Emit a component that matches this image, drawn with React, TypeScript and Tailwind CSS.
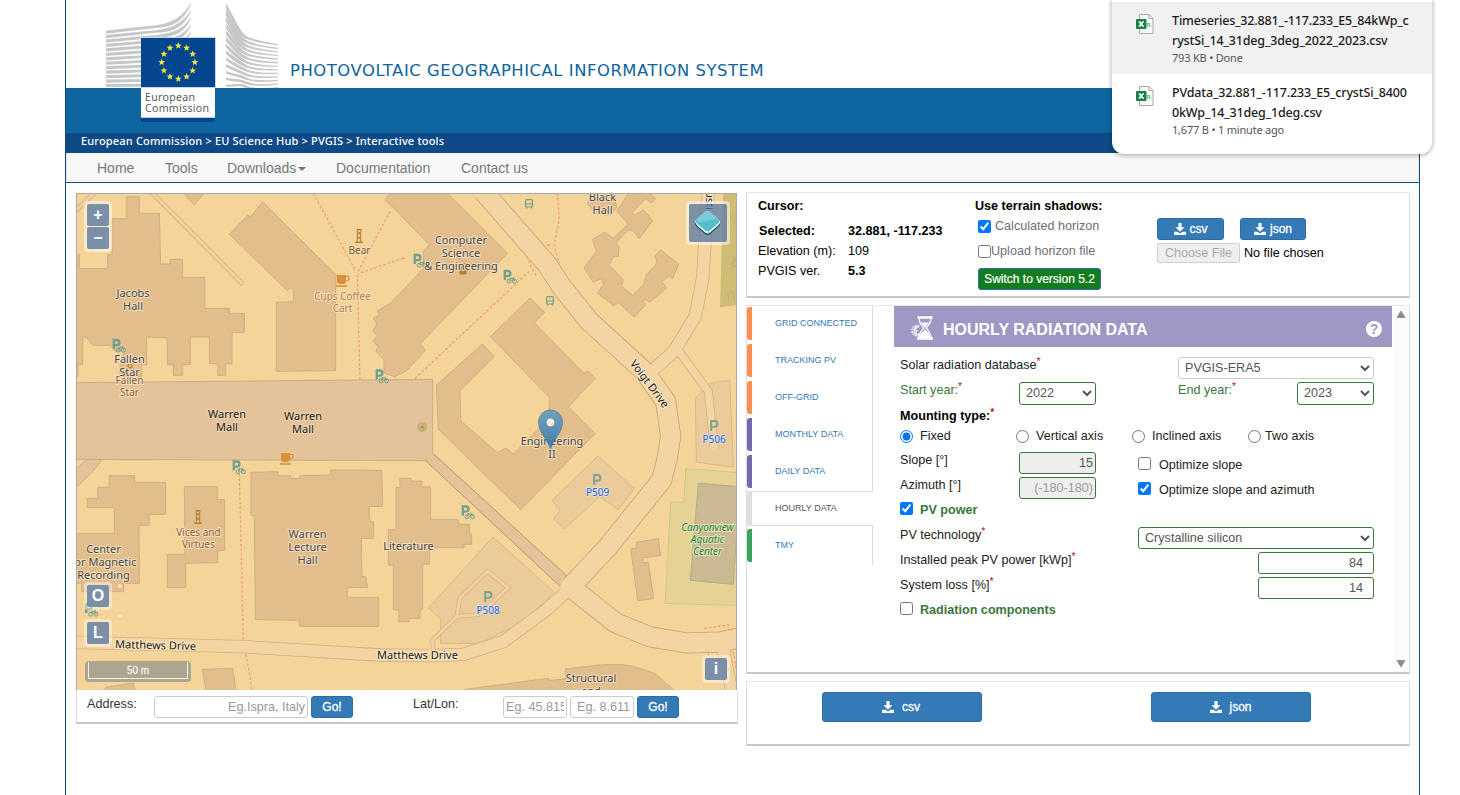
import React from "react";

const ARIAL = "font-['Liberation_Sans',Arial,sans-serif]";
const NOTO = "'Noto Sans', sans-serif";

const range = (n: number) => Array.from({ length: n }, (_, i) => i);

function starPoints(cx: number, cy: number, r: number) {
  return range(10)
    .map((i) => {
      const a = (Math.PI / 5) * i - Math.PI / 2;
      const q = i % 2 ? r * 0.42 : r;
      return `${cx + q * Math.cos(a)},${cy + q * Math.sin(a)}`;
    })
    .join(" ");
}

function CommissionLogo() {
  return (
    <svg width="174" height="122" viewBox="105 0 174 122" className="relative z-10 ml-[39px] shrink-0">
      <defs>
        <clipPath id="pleats">
          <rect x="105" y="0" width="174" height="88" />
        </clipPath>
      </defs>
      <g fill="#c6c7c8" clipPath="url(#pleats)">
        {range(13).map((i) => {
          const a = 30.5 + 4.45 * i;
          const m = 25 + 4.9 * i;
          const e = 3 + 7 * i;
          return (
            <path
              key={i}
              d={`M106 ${a} L158 ${m} C172 ${m - 2} 183 ${e + 13} 191 ${e} L191 ${e + 1.4} C184 ${e + 16.5} 174 ${m + 2.2} 158 ${m + 2.7} L106 ${a + 3.2}Z`}
            />
          );
        })}
        {range(13).map((i) => {
          const a = 3 + 6.8 * i;
          const m = 37 + 4.1 * i;
          const e = 44.3 + 3.55 * i;
          const t = Math.max(2, 6 - i * 0.35);
          return (
            <path
              key={i}
              d={`M226 ${a} C234 ${a + (m - a) * 0.4} 240 ${m - 4} 248 ${m} Q256 ${m + 3.5} 278 ${e} L278 ${e + 1.2} Q256 ${m + 5.5} 246 ${m + 1.8} C238 ${m - 1.5} 233 ${a + t + (m - a) * 0.4} 226 ${a + t}Z`}
            />
          );
        })}
      </g>
      <rect x="141" y="37" width="75" height="51" fill="#c9d6e6" />
      <rect x="141" y="38" width="74" height="49" fill="#03458f" />
      {range(12).map((i) => (
        <polygon
          key={i}
          fill="#f8e83c"
          points={starPoints(178.3 + 16.6 * Math.cos((i * Math.PI) / 6), 62.3 + 16.6 * Math.sin((i * Math.PI) / 6), 3.6)}
        />
      ))}
      <rect x="141" y="88" width="74" height="30" fill="#fff" />
      <rect x="141" y="117" width="74" height="1" fill="#b9cbe0" />
      <rect x="141" y="118" width="74" height="4" fill="#03458f" />
      <g fill="#58595b" fontFamily={NOTO} fontSize="10.6">
        <text x="145" y="101" textLength="50">European</text>
        <text x="145" y="112" textLength="64">Commission</text>
      </g>
    </svg>
  );
}

const polysTL = [
  "20,200 28,200 28,242 113,242 113,200 126,200 126,92 170,92 170,26 208,26 208,76 268,76 272,228 300,228 300,214 338,214 338,268 404,268 404,361 478,361 478,376 523,376 523,434 486,434 486,527 467,527 467,562 443,562 443,527 418,527 418,447 361,447 361,530 338,530 338,562 310,562 310,530 292,530 292,450 230,447 230,530 214,530 214,565 150,565 150,530 160,530 160,490 136,490 120,472 68,472 50,448 38,448 38,530 24,530 24,566 14,566",
  "578,42 800,262 797,270 797,548 619,550 619,343 670,341 670,307 662,298 652,308 478,139 533,82 542,86",
  "336,12 372,50 407,12",
];
const polysTR = [
  "-45,35 -26,12 138,12 322,196 60,468 77,487 20,548 -16,566 -48,555 -48,515 -72,490 -66,475 -81,458 -68,444 -82,428 -69,407 -81,391 -61,380 -69,369 -30,347 0,316 72,240 70,190 88,170 0,80",
  "650,70 685,108 640,150 612,132 600,142 577,155 590,190 552,240 580,282 605,272 610,290 592,315 642,354 655,343 702,388 738,350 727,340 737,335 750,342 800,300 785,280 808,265 818,272 836,228 781,185 765,205 772,225 740,260 730,290 698,323 665,295 670,275 627,232 640,205 655,205 657,180 648,165 680,130 697,125 717,152 758,98 730,65 705,82 695,75 737,32 755,45 767,32 745,10 690,10",
  "562,48 580,10 640,10 650,60 625,82 590,75",
  "390,330 434,373 403,404 552,556 564,548 585,571 506,657 585,737 362,965 115,724 109,592 247,468 283,505 180,608 182,698 292,794 318,780 340,798 448,690 448,628 271,446",
];
const polysBL = [
  "543,52 624,50 624,62 662,62 662,70 690,70 690,62 782,60 782,45 935,46 938,154 897,154 900,199 910,199 910,250 874,250 876,365 887,365 893,397 832,397 832,427 926,427 926,514 688,514 688,496 556,494 553,182 543,182",
  "343,95 442,95 442,134 464,134 464,287 443,287 443,323 347,325 347,398 292,398 292,298 345,298",
  "117,62 194,62 194,82 287,82 287,178 237,178 237,211 207,211 208,385 161,385 161,410 35,410 35,385 14,385 14,235 133,235 133,158 52,158 52,130 83,130 83,97 117,97",
  "398,643 488,640 499,712 408,712",
  "106,697 190,684 196,712 106,712",
];
const polysBR = [
  "0,70 33,70 33,78 66,78 66,96 92,96 92,193 175,193 175,208 208,208 208,238 215,238 215,268 192,268 192,278 88,278 88,328 68,328 68,464 60,464 60,490 28,490 28,500 -4,500 -4,465 -20,465 -20,330 -35,330 -35,223 -12,223 -12,98 0,98",
  "709,262 775,251 782,301 728,309 729,324 745,322 761,431 713,437 692,281 709,279",
  "496,642 610,629 670,629 700,634 765,655 826,710 190,710 195,703 446,670 446,676 496,672",
];

const TL = "translate(70 188) scale(.33333)";
const TR = "translate(400 188) scale(.33333)";
const BL = "translate(70 455) scale(.33333)";
const BR = "translate(400 455) scale(.33333)";

function Polys({ at, list }: { at: string; list: string[] }) {
  return (
    <g transform={at}>
      {list.map((p) => (
        <polygon key={p} points={p} fill="#e3be8d" stroke="#d3ad7d" strokeWidth="3" />
      ))}
    </g>
  );
}

type Road = { d: string; w: number; edge: string };
// Road centre lines share the top-right tile's coordinates.
const roads: Road[] = [
  { d: "M-976 1363 L-470 1376 L-60 1401 L100 1403 L190 1399 L310 1361 L440 1265 L520 1192", w: 35, edge: "#d2b083" },
  { d: "M925 10 L908 270 L886 385 L822 490 L755 550", w: 35, edge: "#d2b083" },
  { d: "M838 492 L925 610 L942 775", w: 22, edge: "#d2b083" },
  { d: "M970 1385 L1010 1580", w: 34, edge: "#d2b083" },
  { d: "M250 10 L442 230 L486 298 L568 400 L733 550 L797 640 L812 745 L801 815 L785 876 L622 1079 L512 1196", w: 58, edge: "#c5a376" },
  { d: "M510 1196 L646 1304 L748 1346 L860 1365 L962 1362 L1030 1347", w: 58, edge: "#c5a376" },
];

function Label({
  x,
  y,
  lines,
  size = 11,
  lh = 13,
  fill = "#4a4540",
  halo = "#f3dfc0",
}: {
  x: number;
  y: number;
  lines: string[];
  size?: number;
  lh?: number;
  fill?: string;
  halo?: string;
}) {
  return (
    <g
      fontSize={size}
      fill={fill}
      stroke={halo}
      strokeWidth="2"
      strokeLinejoin="round"
      paintOrder="stroke"
      textAnchor="middle"
    >
      {lines.map((l, i) => (
        <text key={i} x={x} y={y + i * lh}>
          {l}
        </text>
      ))}
    </g>
  );
}

function BikeParking({ x, y }: { x: number; y: number }) {
  return (
    <g transform={`translate(${x} ${y})`} fill="none" stroke="#729f90">
      <path d="M1.3 10V1h3a2.5 2.5 0 0 1 0 5.2H1.6" strokeWidth="2.3" />
      <g strokeWidth="1">
        <circle cx="5.6" cy="11.2" r="2" />
        <circle cx="11" cy="11.2" r="2" />
        <path d="M5.6 11.2L7 8.6h3l1 2.6M8.4 11L10 8.4M6.4 8h1.4M9.6 7.6h1.2" />
      </g>
    </g>
  );
}

function ParkingP({ x, y }: { x: number; y: number }) {
  return <path transform={`translate(${x} ${y})`} d="M1.2 11V1h3.4a2.8 2.8 0 0 1 0 5.7H1.2" fill="none" stroke="#7aa391" strokeWidth="2" />;
}

function Cup({ x, y }: { x: number; y: number }) {
  return (
    <g transform={`translate(${x} ${y})`} stroke="#d9923a">
      <path d="M1 0h9v6q0 3-3 3H4Q1 9 1 6Z" fill="#d9923a" stroke="none" />
      <path d="M10 1.5h3v2.2q0 1.8-3 1.8" fill="none" strokeWidth="1.2" />
      <path d="M0 11h11" strokeWidth="1.6" />
    </g>
  );
}

function Artwork({ x, y }: { x: number; y: number }) {
  return (
    <g transform={`translate(${x} ${y})`} fill="none" stroke="#b37f33" strokeWidth="1">
      <path d="M1.500 .7h5M0 13.300h8" strokeWidth="1.4" />
      <path d="M2.300 1.500v11M5.700 1.500v11M2.300 2.500l3.400 3.500M5.700 2.500L2.300 6M2.300 7l3.400 3.500M5.700 7l-3.400 3.500" />
    </g>
  );
}

function Bus({ x, y }: { x: number; y: number }) {
  return (
    <g transform={`translate(${x} ${y})`} fill="none" stroke="#729f90" strokeWidth="1.2">
      <rect x=".6" y=".6" width="6.8" height="7.4" rx="1" />
      <path d="M.6 5h6.8M1.5 8v1.6M6.5 8v1.6" />
    </g>
  );
}

function CampusMap() {
  return (
    <svg width="660" height="496" viewBox="77 194 660 496" className="block" fontFamily={NOTO}>
      <rect x="77" y="194" width="660" height="496" fill="#f5d499" />
      <g transform={TR}>
        <polygon points="970,10 1020,10 1020,350 960,358" fill="#cebd73" />
        <g fill="none" stroke="#c2ad67" strokeWidth="3">
          <path d="M985 110v-18l-4-4 8-12 8 12-4 4M1003 110V88M995 235l8-28 8 28zM985 335v-18l8-5M1003 338v-22l-6-6" />
        </g>
      </g>
      <g transform={BR}>
        <polygon points="858,41 1020,53 1020,452 796,445 812,142 851,142" fill="#e7d295" stroke="#c3cf7d" strokeWidth="3" />
        <polygon points="895,85 1020,95 1000,388 871,376" fill="#cbba91" stroke="#b3ae83" strokeWidth="3" />
        <g fill="#eccb9a" stroke="#dcb88a" strokeWidth="3">
          <polygon points="594,3 704,101 655,164 600,125 493,222 460,190 480,168 457,135" />
          <polygon points="279,246 462,411 410,465 350,510 240,565 122,565 122,492 85,459" />
        </g>
      </g>
      <polygon transform={TR} points="930,585 989,577 1000,838 889,822 886,632" fill="#eccb9a" stroke="#dcb88a" strokeWidth="3" />

      {/* pedestrian mall and service alleys */}
      <g transform={TR} fill="#e4c39a" stroke="#cdab80" strokeWidth="3">
        <path d="M-940 815 L-895 815 Q-915 850 -980 905 L-980 850Z" />
        <path d="M77 818 L102 799 L500 1163 L480 1195Z" stroke="#b9976b" />
        <polygon points="-980,584 98,574 98,797 77,818 -980,814" />
      </g>
      <path d="M427 459.500 L432.500 454.500" stroke="#e4c39a" strokeWidth="3" />
      <g transform={TL} fill="none">
        <path d="M240 8L514 284M10 75L80 8" stroke="#d9b587" strokeWidth="15" strokeLinecap="round" />
        <path d="M240 8L514 284M10 75L80 8" stroke="#f3d19c" strokeWidth="9" strokeLinecap="round" />
      </g>

      <Polys at={TL} list={polysTL} />
      <Polys at={TR} list={polysTR} />
      <Polys at={BL} list={polysBL} />
      <Polys at={BR} list={polysBR} />

      <g transform={TR} fill="none" strokeLinejoin="round">
        {roads.map((r) => (
          <path key={r.d} d={r.d} stroke={r.edge} strokeWidth={r.w + 5} />
        ))}
        {roads.map((r) => (
          <path key={r.d} d={r.d} stroke="#f5d4a4" strokeWidth={r.w} strokeLinecap="round" />
        ))}
      </g>
      <g transform={BR} fill="none">
        <path d="M100 585L98 555L170 485L180 428L262 349L324 398L240 478L170 485" stroke="#d9b587" strokeWidth="14" />
        <path d="M100 592L98 555L170 485L180 428L262 349L324 398L240 478L170 485" stroke="#f3d19f" strokeWidth="9" />
      </g>

      <g fill="none" stroke="#f29b76" strokeWidth="3.6" strokeDasharray="8 6">
        <g transform={TL}>
          <path d="M730 16L858 250M960 70L865 250M1000 210L865 257M862 260L870 578" />
        </g>
        <g transform={TR}>
          <path d="M388 250L43 573M472 16L478 90L462 175L478 225M380 205L395 240L408 262M442 172L455 170M6 212L16 210" />
        </g>
        <g transform={BL}>
          <path d="M507 14L520 558M527 598Q540 650 545 710" />
        </g>
        <g transform={BR}>
          <path d="M912 520L985 510L988 525M925 595L930 640M1000 590L1008 640" />
        </g>
      </g>

      <circle cx="422.3" cy="427.3" r="5" fill="#c2b377" />
      <circle cx="422.3" cy="427.3" r="1.2" fill="#b98c3c" />
      <circle cx="120" cy="586" r="2" fill="#f6e6c8" />
      <circle cx="120" cy="616" r="2" fill="#f6e6c8" />
      <circle cx="130" cy="366" r="2" fill="none" stroke="#b37f33" strokeWidth="1.2" />
      <path d="M460 267h6v7h-6zM461 264h7" fill="#b37f33" stroke="#b37f33" />

      <Cup x={336} y={275} />
      <Cup x={280} y={453} />
      <Artwork x={355} y={229} />
      <Artwork x={194} y={510} />
      <Bus x={525} y={199} />
      <Bus x={546} y={296} />
      <BikeParking x={112.5} y={339} />
      <BikeParking x={375.5} y={369.5} />
      <BikeParking x={232.5} y={460.5} />
      <BikeParking x={413.5} y={254} />
      <BikeParking x={503.5} y={270} />
      <BikeParking x={461.5} y={505.5} />
      <BikeParking x={85} y={603} />
      <ParkingP x={593} y={474} />
      <ParkingP x={484} y={591} />
      <ParkingP x={710} y={420} />

      <Label x={133} y={297} lines={["Jacobs", "Hall"]} />
      <Label x={129.5} y={383.5} lines={["Fallen", "Star"]} size={10} lh={12} fill="#8a6233" />
      <Label x={129.5} y={363} lines={["Fallen", "Star"]} />
      <Label x={359.5} y={254} lines={["Bear"]} size={10} fill="#7b5a31" />
      <Label x={342.5} y={300} lines={["Cups Coffee", "Cart"]} size={10} lh={12} fill="#b9803f" />
      <Label x={227} y={418} lines={["Warren", "Mall"]} fill="#1d1a17" halo="#ecd3b0" />
      <Label x={303} y={420} lines={["Warren", "Mall"]} fill="#1d1a17" halo="#ecd3b0" />
      <Label x={461} y={244} lines={["Computer", "Science", "& Engineering"]} />
      <Label x={602.5} y={201} lines={["Black", "Hall"]} />
      <Label x={552} y={444.5} lines={["Engineering", "II"]} />
      <Label x={307.5} y={537.7} lines={["Warren", "Lecture", "Hall"]} />
      <Label x={198.5} y={535.5} lines={["Vices and", "Virtues"]} size={10} lh={12} fill="#8a6233" />
      <Label x={103.5} y={553.3} lines={["Center", "for Magnetic", "Recording"]} />
      <Label x={408.5} y={549.5} lines={["Literature"]} />
      <Label x={591} y={682} lines={["Structural", "and"]} />
      <g strokeWidth="1">
        <Label x={597.5} y={496} lines={["P509"]} size={10} fill="#1f66ea" halo="#e6dccb" />
        <Label x={488} y={614} lines={["P508"]} size={10} fill="#1f66ea" halo="#e6dccb" />
        <Label x={714} y={443} lines={["P506"]} size={10} fill="#1f66ea" halo="#e6dccb" />
      </g>
      <g fontStyle="italic">
        <Label x={707.5} y={531} lines={["Canyonview", "Aquatic", "Center"]} size={10} lh={12} fill="#2b7d43" halo="#e3e3b8" />
      </g>
      <g transform="rotate(1.5 155 648)">
        <Label x={155.5} y={649} lines={["Matthews Drive"]} fill="#141210" halo="#fdeccd" />
      </g>
      <Label x={417.5} y={659} lines={["Matthews Drive"]} fill="#141210" halo="#fdeccd" />
      <g transform="translate(646.5 386) rotate(53)">
        <Label x={0} y={0} lines={["Voigt Drive"]} fill="#141210" halo="#fdeccd" />
      </g>
      <g transform="translate(706 199) rotate(91)">
        <Label x={0} y={0} lines={["Justi"]} fill="#141210" halo="#fdeccd" />
      </g>

      {/* selected location */}
      <defs>
        <linearGradient id="pin" x1="0" y1="0" x2="0" y2="1">
          <stop offset="0" stopColor="#639cc2" />
          <stop offset="1" stopColor="#2f74b0" />
        </linearGradient>
      </defs>
      <path
        d="M550.5 449 C548 440.500 538.5 432.500 538.5 422 A12 12 0 0 1 562.5 422 C562.5 432.500 553 440.500 550.5 449Z"
        fill="url(#pin)"
        stroke="#3d789f"
        strokeWidth=".8"
        opacity=".87"
      />
      <circle cx="550.5" cy="422.5" r="4.4" fill="#f7eee3" stroke="#3d789f" strokeWidth=".6" />
    </svg>
  );
}

function MapButton({ className, children }: { className: string; children: React.ReactNode }) {
  return (
    <div className={`absolute rounded-[4px] bg-white/40 p-[3px] ${className}`}>
      <button className="flex h-[22px] w-[22px] items-center justify-center rounded-[2px] bg-[#7b8fa9] text-[16px] leading-none font-bold text-white">
        {children}
      </button>
    </div>
  );
}

function DownloadIcon({ className = "" }: { className?: string }) {
  return (
    <svg width="12" height="12" viewBox="0 0 12 12" fill="#fff" className={className}>
      <path d="M4.4 0h3.2v4.2h3L6 8.8 1.4 4.2h3z" />
      <path d="M0 8.7h3.6L6 10.6l2.4-1.9H12V12H0z" />
    </svg>
  );
}

const BTN =
  "flex items-center justify-center border border-[#2e6da4] bg-[#337ab7] text-[12px] leading-none text-white [-webkit-text-stroke:0.3px_white]";

const PANEL = "border border-b-2 border-[#ddd] border-t-[#e6e6e6] border-b-[#c8c8c8] bg-white";

function LocationPanel() {
  return (
    <section className={`${PANEL} flex h-[106px] text-black`}>
      <div className="w-[228px] pt-[4px] pl-[11px] leading-[18px]">
        <div className="h-[25px] font-bold">Cursor:</div>
        <div className="flex h-5 font-bold">
          <span className="w-[90px] pl-px">Selected:</span>32.881, -117.233
        </div>
        <div className="flex h-5">
          <span className="w-[90px]">Elevation (m):</span>109
        </div>
        <div className="flex h-5">
          <span className="w-[90px]">PVGIS ver.</span>
          <b>5.3</b>
        </div>
      </div>
      <div className="w-[182px] pt-[4px] leading-[18px]">
        <div className="h-[20px] font-bold">Use terrain shadows:</div>
        <label className="flex h-[25px] pl-[3px] text-[#6b7076]">
          <input type="checkbox" defaultChecked className="mt-[3px] mr-[4px] h-[13px] w-[13px]" />
          Calculated horizon
        </label>
        <label className="flex h-[26px] pl-[3px] text-[#6b7076]">
          <input type="checkbox" className="mt-[3px] h-[13px] w-[13px]" />
          Upload horizon file
        </label>
        <button className="ml-[3px] flex h-[22px] w-[123px] items-center justify-center rounded-[3px] border border-[#2e6da4] bg-[#127c1e] text-[12px] text-white [-webkit-text-stroke:0.2px_white]">
          Switch to version 5.2
        </button>
      </div>
      <div className="pt-[25px]">
        <div className="flex">
          <button className={`${BTN} h-[22px] w-[67px] gap-[4px] rounded-[3px]`}>
            <DownloadIcon className="-mt-px" />
            csv
          </button>
          <button className={`${BTN} ml-4 h-[22px] w-[66px] gap-[4px] rounded-[3px]`}>
            <DownloadIcon className="-mt-px" />
            json
          </button>
        </div>
        <div className="mt-[3px] flex h-5 items-center">
          <button className="mr-[4px] h-5 w-[83px] rounded-[2px] border border-[#cfcfcf] bg-[#efefef] leading-none text-[#aaa]">
            Choose File
          </button>
          No file chosen
        </div>
      </div>
    </section>
  );
}

const tabs = [
  { name: "GRID CONNECTED", bar: "bg-[#fb8f4e]" },
  { name: "TRACKING PV", bar: "bg-[#fb8f4e]" },
  { name: "OFF-GRID", bar: "bg-[#fb8f4e]" },
  { name: "MONTHLY DATA", bar: "bg-[#7569ae]" },
  { name: "DAILY DATA", bar: "bg-[#7569ae]" },
  { name: "HOURLY DATA", bar: "bg-[#dedede]", active: true },
  { name: "TMY", bar: "bg-[#3aa35c]" },
];

function ToolTabs() {
  return (
    <nav className="flex w-[126px] flex-col text-[9px]">
      {tabs.map((t) => (
        <div key={t.name} className={`flex h-[37px] ${t.active ? "" : "border-r border-[#ddd]"}`}>
          <div
            className={`flex h-[35px] flex-1 items-start ${t.active ? "-mr-px border-y border-[#ddd]" : "border-y border-transparent"}`}
          >
            <span className={`h-[33px] w-[5px] rounded-l-[3px] ${t.bar}`} />
            <span className={`pl-[23px] leading-[32px] ${t.active ? "text-[#555]" : "text-[#337ab7]"}`}>{t.name}</span>
          </div>
          {t.active && <div className="w-px self-end bg-[#ddd] pt-[3px]" />}
        </div>
      ))}
    </nav>
  );
}

function HourglassIcon() {
  return (
    <svg width="24" height="24" viewBox="0 0 24 24" fill="none" stroke="#fff" className="mt-[2px]">
      <path d="M7.5 1.5h15M7 22.5h16" strokeWidth="2.4" />
      <path d="M9 2.500c0 5 3 7 4.800 9.500-1.800 2.500-4.800 4.500-4.800 9.500h12c0-5-3-7-4.800-9.500C18 9.500 21 7.500 21 2.500" strokeWidth="1.300" />
      <path d="M9.800 21c.4-4 3-5 5.200-7.500C17.200 16 20 17 20.300 21zM11 6.500h8l-4 5z" fill="#fff" stroke="none" />
      <path d="M9 10a5 5 0 1 0 1.500 8.500" strokeWidth="2" strokeDasharray="1.500 1" />
      <path d="M9 11.200a3.600 3.600 0 1 0 .6 6.600" strokeWidth="1.200" />
      <path d="M6.500 12L5.300 14.500h2L6 17" strokeWidth=".9" />
    </svg>
  );
}

function Req() {
  return <sup className="-top-[0.42em] text-[10.500px] text-[#b5241a]">*</sup>;
}

const GREEN_FIELD = "rounded-[3px] border border-[#3c763d] text-[12.6px] text-[#555]";

function HourlyForm() {
  return (
    <div className="w-[498px]">
      <header className="flex h-[41px] items-center bg-[#9e98c5] pr-[10px] pl-[16px] text-white">
        <HourglassIcon />
        <h2 className="ml-[9px] flex-1 pt-[7px] text-[16px] leading-none font-bold">HOURLY RADIATION DATA</h2>
        <span className="mt-[5px] flex h-4 w-4 items-center justify-center rounded-full bg-white text-[14px] leading-none font-bold text-[#9e98c5]">
          ?
        </span>
      </header>
      <form className="pt-[9px] pl-[6px] leading-[18px] text-[#222]">
        <div className="flex h-[25px] items-start">
          <span className="w-[278px]">
            Solar radiation database
            <Req />
          </span>
          <select className="mt-px h-[22px] w-[196px] rounded-[3px] border border-[#ccc] bg-white pl-[2px] text-[12.6px] text-[#555]">
            <option>PVGIS-ERA5</option>
          </select>
        </div>
        <div className="flex h-[25px] items-start text-[#3c763d]">
          <span className="w-[119px]">
            Start year:
            <Req />
          </span>
          <select className={`${GREEN_FIELD} mt-px h-[23px] w-[77px] bg-white pb-px pl-[2px]`}>
            <option>2022</option>
          </select>
          <span className="ml-[82px] w-[119px]">
            End year:
            <Req />
          </span>
          <select className={`${GREEN_FIELD} mt-px h-[23px] w-[77px] bg-white pb-px pl-[2px]`}>
            <option>2023</option>
          </select>
        </div>
        <div className="h-[21px] pt-px font-bold text-black">
          Mounting type:
          <Req />
        </div>
        <div className="flex h-[24px] items-start">
          {[
            ["Fixed", "w-[116px]", "mr-[7px]"],
            ["Vertical axis", "w-[116px]", "mr-[7px]"],
            ["Inclined axis", "w-[116px]", "mr-[7px]"],
            ["Two axis", "w-[116px]", "mr-[4px]"],
          ].map(([name, w, gap], i) => (
            <label key={name} className={`flex ${w}`}>
              <input type="radio" name="mount" defaultChecked={i === 0} className={`mt-[3px] h-[13px] w-[13px] ${gap}`} />
              {name}
            </label>
          ))}
        </div>
        <div className="flex h-[25px] items-start">
          <span className="w-[119px]">Slope [°]</span>
          <input readOnly value="15" className={`${GREEN_FIELD} mt-px h-[22px] w-[77px] bg-[#eee] pr-[2px] text-right`} />
          <label className="ml-[42px] flex pt-[5px]">
            <input type="checkbox" className="mt-px mr-[8px] h-[13px] w-[13px]" />
            Optimize slope
          </label>
        </div>
        <div className="flex h-[25px] items-start">
          <span className="w-[119px]">Azimuth [°]</span>
          <input
            readOnly
            placeholder="(-180-180)"
            className={`${GREEN_FIELD} mt-px h-[22px] w-[77px] bg-[#eee] pr-[2px] text-right placeholder:text-[#999]`}
          />
          <label className="ml-[42px] flex pt-[5px]">
            <input type="checkbox" defaultChecked className="mt-px mr-[8px] h-[13px] w-[13px]" />
            Optimize slope and azimuth
          </label>
        </div>
        <label className="flex h-[25px] items-start font-bold text-[#3c763d]">
          <input type="checkbox" defaultChecked className="mt-px mr-[7px] h-[13px] w-[13px]" />
          PV power
        </label>
        <div className="flex h-[25px] items-start">
          <span className="w-[238px]">
            PV technology
            <Req />
          </span>
          <select className={`${GREEN_FIELD} mt-px h-[22px] w-[236px] bg-white pl-[2px]`}>
            <option>Crystalline silicon</option>
          </select>
        </div>
        <div className="flex h-[25px] items-start">
          <span className="w-[358px]">
            Installed peak PV power [kWp]
            <Req />
          </span>
          <input readOnly value="84" className={`${GREEN_FIELD} mt-px h-[22px] w-[116px] pr-[10px] text-right`} />
        </div>
        <div className="flex h-[25px] items-start">
          <span className="w-[358px]">
            System loss [%]
            <Req />
          </span>
          <input readOnly value="14" className={`${GREEN_FIELD} mt-px h-[22px] w-[116px] pr-[10px] text-right`} />
        </div>
        <label className="flex h-[25px] items-start font-bold text-[#3c763d]">
          <input type="checkbox" className="mt-px mr-[7px] h-[13px] w-[13px]" />
          Radiation components
        </label>
      </form>
    </div>
  );
}

function Scrollbar() {
  return (
    <div className="ml-[2px] flex w-[14px] flex-col items-center justify-between bg-[#fcfcfc] py-[4px]">
      <svg width="10" height="8" viewBox="0 0 10 8">
        <path d="M5 1L9 7.500H1z" fill="#8b8b8b" stroke="#8b8b8b" strokeLinejoin="round" strokeWidth=".8" />
      </svg>
      <svg width="10" height="8" viewBox="0 0 10 8">
        <path d="M5 7L9 .5H1z" fill="#8b8b8b" stroke="#8b8b8b" strokeLinejoin="round" strokeWidth=".8" />
      </svg>
    </div>
  );
}

function CsvFileIcon() {
  return (
    <svg width="18" height="20" viewBox="0 0 18 20" className="mt-[12px] shrink-0">
      <path d="M3.500.5H13l4 4V19.500H3.500z" fill="#fafafa" stroke="#a9a9a9" />
      <path d="M13 .5v4h4" fill="none" stroke="#a9a9a9" />
      <rect x="0" y="5" width="10.500" height="10" rx="1" fill="#1a7f47" />
      <path d="M3 7.300l4.500 5.400M7.500 7.300L3 12.700" stroke="#fff" strokeWidth="1.700" />
      <path d="M11.500 9.500h2v2.500h-2zM15 11.500v1" fill="none" stroke="#67c99a" strokeWidth="1.200" />
    </svg>
  );
}

const downloads = [
  {
    lines: ["Timeseries_32.881_-117.233_E5_84kWp_c", "rystSi_14_31deg_3deg_2022_2023.csv"],
    meta: "793 KB • Done",
    hover: true,
  },
  {
    lines: ["PVdata_32.881_-117.233_E5_crystSi_8400", "0kWp_14_31deg_1deg.csv"],
    meta: "1,677 B • 1 minute ago",
    hover: false,
  },
];

function DownloadsPopup() {
  return (
    <aside className="absolute top-0 left-[1112px] z-20 h-[154px] w-[320px] overflow-hidden rounded-b-[12px] bg-white pt-[2px] font-['Noto_Sans',sans-serif] shadow-[0_1px_4px_1px_rgba(0,0,0,0.25)]">
      {downloads.map((d) => (
        <div key={d.meta} className={`flex h-[72px] pl-[24px] ${d.hover ? "bg-[#f1f1f1]" : ""}`}>
          <CsvFileIcon />
          <div className="ml-[18px] pt-[9px]">
            {d.lines.map((l) => (
              <div key={l} className="h-5 text-[12.500px] leading-5 font-medium tracking-[-0.15px] whitespace-nowrap text-[#1b1b1b]">
                {l}
              </div>
            ))}
            <div className="-mt-px text-[11px] leading-[16px] tracking-[-0.2px] text-[#555]">{d.meta}</div>
          </div>
        </div>
      ))}
    </aside>
  );
}

export default function App() {
  return (
    <div className={`relative h-[795px] w-[1460px] overflow-hidden bg-white pl-[65px] text-[12.6px] ${ARIAL}`}>
      <div className="h-[795px] w-[1355px] border-x border-[#0f4880]">
        <header className="flex h-[88px] items-start">
          <CommissionLogo />
          <h1 className="mt-[61px] ml-[11px] font-['DejaVu_Sans',Verdana,sans-serif] text-[16.4px] leading-[20px] tracking-[0.55px] whitespace-nowrap text-[#0e639d]">
            PHOTOVOLTAIC GEOGRAPHICAL INFORMATION SYSTEM
          </h1>
        </header>
        <div className="h-[45px] bg-[#0e659f]" />
        <div className="h-5 bg-[#0f4a86] pl-[15px] font-['Noto_Sans',sans-serif] text-[11px] leading-[16px] font-medium tracking-[0.17px] text-white">
          European Commission &gt; EU Science Hub &gt; PVGIS &gt; Interactive tools
        </div>
        <nav className="flex h-[30px] items-start border-b border-[#0f4880] pb-px">
          <div className="flex h-[28px] w-full items-center border border-t-0 border-[#e7e7e7] bg-[#f8f8f8] pt-[4px] pl-[30px] text-[14px] text-[#777]">
            <span className="w-[68px]">Home</span>
            <span className="w-[62px]">Tools</span>
            <span className="flex w-[109px] items-center">
              Downloads
              <i className="mt-px ml-[2px] border-x-4 border-t-4 border-x-transparent border-t-[#777]" />
            </span>
            <span className="w-[125px]">Documentation</span>
            <span>Contact us</span>
          </div>
        </nav>
        <main className="flex gap-[8px] pt-[9px] pl-[10px]">
          <div className="w-[662px] pt-px">
            <div className="relative h-[497px] w-[661px] overflow-hidden border border-b-0 border-[#a9a9a9]">
              <CampusMap />
              <div className="absolute top-[7px] left-[7px] flex flex-col gap-px rounded-[4px] bg-white/50 p-[3px]">
                {["+", "−"].map((s) => (
                  <button
                    key={s}
                    className="flex h-[22px] w-[22px] items-center justify-center rounded-[2px] bg-[#7b8fa9] text-[16px] leading-none font-bold text-white"
                  >
                    {s}
                  </button>
                ))}
              </div>
              <div className="absolute top-[7px] left-[609px] rounded-[4px] bg-white/50 p-[3px]">
                <button className="block h-[38px] w-[38px] rounded-[2px] bg-[#00377c]/50">
                  <svg width="38" height="38" viewBox="0 0 38 38">
                    <path d="M6 19Q6 17 8 16L16 8.500Q18.500 7 21 8.500L29 16Q31 17 31 20Q31 21 29 23L21 30Q18.500 32 16 30L8 23Q6 21 6 19Z" fill="#14495a" />
                    <path d="M6 18Q6 16 8 15L16 8Q18.500 6 21 8L29 15Q31 16 31 19L29 21.500 21 28.500Q18.500 30.500 16 28.500L8 21.500Z" fill="#fff" />
                    <path d="M6.300 17.500Q6.500 16 8 14.800L16 8Q18.500 6 21 8L29 14.800Q31.500 17 29 19.500L21 26.500Q18.500 28.500 16 26.500L8 19.500Q6.300 18.500 6.300 17.500Z" fill="#56bdca" />
                    <path d="M8 14.800L16 8Q18.500 6 21 8L29 14.800L22 16 8 18.500Z" fill="#7accd6" />
                  </svg>
                </button>
              </div>
              <MapButton className="top-[388px] left-[7px]">O</MapButton>
              <MapButton className="top-[425px] left-[7px]">L</MapButton>
              <MapButton className="top-[461px] left-[625px]">i</MapButton>
              <div className="absolute top-[467px] left-[8px] rounded-[4px] bg-[#ada58e] p-[3px] pt-px">
                <div className="h-[17px] w-[100px] border border-t-0 border-[#f0f0ee] text-center text-[10px] leading-[17px] text-[#f0f0ee] [-webkit-text-stroke:0.3px_#f0f0ee]">
                  50 m
                </div>
              </div>
            </div>
            <div className={`${PANEL} flex h-[34px] items-start border-t-0 pt-[6px] pl-[10px] text-[#333]`}>
              <span className="w-[67px] leading-[17px]">Address:</span>
              <input
                placeholder="Eg.Ispra, Italy"
                className="h-[22px] w-[154px] rounded-[3px] border border-[#ccc] pr-[2px] text-right placeholder:text-[#999]"
              />
              <button className={`${BTN} ml-[3px] h-[22px] w-[42px] rounded-[3px]`}>Go!</button>
              <span className="ml-[60px] w-[90px] leading-[17px]">Lat/Lon:</span>
              <input
                placeholder="Eg. 45.815"
                className="h-[22px] w-[64px] rounded-[3px] border border-[#ccc] px-[2px] placeholder:text-[#999]"
              />
              <input
                placeholder="Eg. 8.611"
                className="ml-[3px] h-[22px] w-[64px] rounded-[3px] border border-[#ccc] pr-[3px] text-right placeholder:text-[#999]"
              />
              <button className={`${BTN} ml-[3px] h-[22px] w-[42px] rounded-[3px]`}>Go!</button>
            </div>
          </div>
          <div className="flex w-[664px] flex-col gap-[7px]">
            <LocationPanel />
            <section className={`${PANEL} flex h-[369px]`}>
              <ToolTabs />
              <div className="ml-[21px]">
                <HourlyForm />
              </div>
              <Scrollbar />
            </section>
            <section className={`${PANEL} flex h-[65px] pt-[10px] pl-[75px]`}>
              <button className={`${BTN} h-[30px] w-[160px] gap-[8px] rounded-[3px]`}>
                <DownloadIcon className="-ml-[2px]" />
                csv
              </button>
              <button className={`${BTN} ml-[169px] h-[30px] w-[160px] gap-[7px] rounded-[3px]`}>
                <DownloadIcon />
                json
              </button>
            </section>
          </div>
        </main>
      </div>
      <DownloadsPopup />
    </div>
  );
}
